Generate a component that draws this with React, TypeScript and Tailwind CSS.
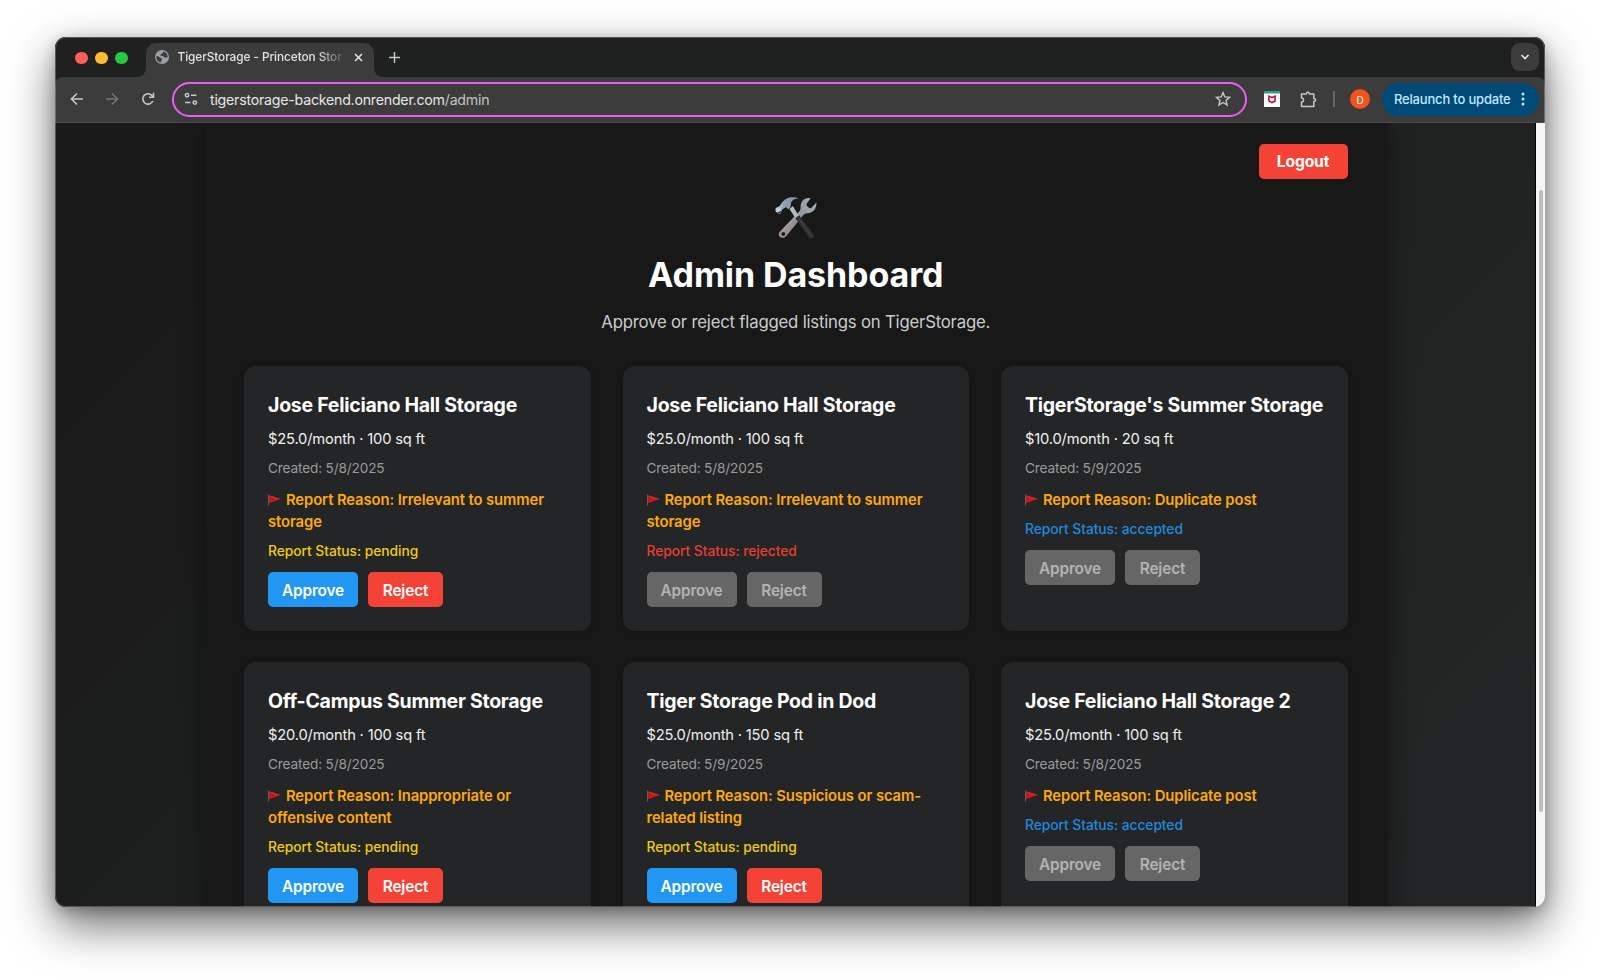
import type { ReactNode } from "react";

type Status = "pending" | "rejected" | "accepted";

interface Listing {
  title: string;
  price: string;
  created: string;
  reason: string[];
  status: Status;
}

const listings: Listing[] = [
  { title: "Jose Feliciano Hall Storage", price: "$25.0/month · 100 sq ft", created: "5/8/2025", reason: ["Irrelevant to summer", "storage"], status: "pending" },
  { title: "Jose Feliciano Hall Storage", price: "$25.0/month · 100 sq ft", created: "5/8/2025", reason: ["Irrelevant to summer", "storage"], status: "rejected" },
  { title: "TigerStorage's Summer Storage", price: "$10.0/month · 20 sq ft", created: "5/9/2025", reason: ["Duplicate post"], status: "accepted" },
  { title: "Off-Campus Summer Storage", price: "$20.0/month · 100 sq ft", created: "5/8/2025", reason: ["Inappropriate or", "offensive content"], status: "pending" },
  { title: "Tiger Storage Pod in Dod", price: "$25.0/month · 150 sq ft", created: "5/9/2025", reason: ["Suspicious or scam-", "related listing"], status: "pending" },
  { title: "Jose Feliciano Hall Storage 2", price: "$25.0/month · 100 sq ft", created: "5/8/2025", reason: ["Duplicate post"], status: "accepted" },
];

const statusColor: Record<Status, string> = {
  pending: "text-[#f0cb0c]",
  rejected: "text-[#e83e32]",
  accepted: "text-[#2089de]",
};

function Flag() {
  return (
    <svg className="mr-[5px] inline-block h-3 w-[13px] align-[-1px]" viewBox="0 0 13 12">
      <path d="M1 1.2 13 5 1 9.300Z" fill="#c8161a" />
      <path d="M1 1.2 13 5 6 4.600Z" fill="#e0473f" opacity=".6" />
      <path d="M.5.5V11.500" stroke="#6b6f72" strokeWidth=".8" />
    </svg>
  );
}

function Tools() {
  return (
    <svg className="h-[42px] w-[42px]" viewBox="0 0 42 42">
      <defs>
        <linearGradient id="steel" x1="1" y1="0" x2="0" y2="1">
          <stop offset="0" stopColor="#a9b3bf" />
          <stop offset=".5" stopColor="#8f8f98" />
          <stop offset="1" stopColor="#a48f92" />
        </linearGradient>
        <linearGradient id="head" x1="0" y1="0" x2="1" y2="0">
          <stop offset="0" stopColor="#c4d6e6" />
          <stop offset=".35" stopColor="#8f9fb0" />
          <stop offset="1" stopColor="#7f90a2" />
        </linearGradient>
      </defs>
      <path
        d="M35.6 1.2c-5.200-1.200-10.200 2.800-10 8.300.1 2-.2 3.500-1.200 4.700L4.700 34.700c-2.700 3.400.8 7.600 4.800 5.700 1-.5 1.500-1 2.200-1.900L28.400 18c1-1.100 2.400-1.600 4.100-1.700 5.300-.2 9.400-4.800 8.900-10.800l-5.400 5.700c-2.200.4-4.200-1.400-4.500-4.100Z"
        fill="url(#steel)"
      />
      <path d="M7 34.500 26 14.500" stroke="#c9c4c8" strokeWidth=".8" opacity=".6" />
      <circle cx="8.300" cy="37" r="1.900" fill="#1b1b1b" />
      <path d="m14.500 12 3.300-3 6.300 10.500-3.100 2.500Z" fill="#b3bcc5" />
      <path d="m20.300 21 3.900-2.700 13.900 18.200c2.400 3.500-.900 6.600-4 4.200Z" fill="#303134" />
      <path d="m23.500 21.500 12 16.500" stroke="#4a4b4e" strokeWidth=".9" />
      <path
        d="M1.300 11.300 5 8.800c1.900-3.500 5-7.300 9.500-8.200 3-.6 6.500-.5 9.200.9-4 .1-6.700 1.500-7.700 4.200-.1 2.600-.3 5-2.200 6.600l-3-2-3.600 2.200-2 4.200c-3 .4-4.900-2.300-3.900-5.400Z"
        fill="url(#head)"
      />
      <circle cx="3" cy="12.800" r="2.600" fill="#b9d0e2" />
      <path d="M2.300 16.300 5.900 14.700" stroke="#35383c" strokeWidth="1.300" />
    </svg>
  );
}

function Button({ color, children }: { color: string; children: ReactNode }) {
  return (
    <button className={`h-[35px] rounded-[5px] pt-[2px] text-[15.4px] font-semibold tracking-[-0.17px] ${color}`}>
      {children}
    </button>
  );
}

function Card({ item }: { item: Listing }) {
  const open = item.status === "pending";
  return (
    <article className="h-[264.500px] rounded-xl bg-[#242527] p-6 shadow-[0_2px_8px_rgba(0,0,0,0.15)]">
      <h2 className="mb-[7px] h-[31px] text-[19.500px] leading-[31px] font-[650] tracking-[-0.26px] whitespace-nowrap text-white">{item.title}</h2>
      <p className="mb-[7px] text-[14.700px] leading-[22px] tracking-[-0.17px] text-[#f0f0f0]">{item.price}</p>
      <p className="mb-[10px] text-[13.700px] leading-[22px] tracking-[-0.18px] text-[#9a9a9a]">Created: {item.created}</p>
      <p className="mb-[6.500px] text-[14.800px] leading-[22px] font-semibold tracking-[-0.09px] whitespace-nowrap text-[#ffa90a]">
        <Flag />
        Report Reason: {item.reason[0]}
        {item.reason[1] && <br />}
        {item.reason[1]}
      </p>
      <p className={`mb-[10.500px] text-[13.800px] leading-[22px] font-medium tracking-[-0.05px] ${statusColor[item.status]}`}>
        Report Status: {item.status}
      </p>
      <div className="flex gap-2.5 [&>button:first-child]:w-[90px] [&>button:last-child]:w-[75px]">
        <Button color={open ? "bg-[#2196f3] text-white" : "bg-[#666666] text-[#b3b3b3]"}>Approve</Button>
        <Button color={open ? "bg-[#f44336] text-white" : "bg-[#666666] text-[#b3b3b3]"}>Reject</Button>
      </div>
    </article>
  );
}

function TabStrip() {
  return (
    <div className="flex h-[39.500px] shrink-0 items-end bg-[#1f2120] pr-1.5">
      <div className="mb-[12.500px] ml-5 flex gap-[7.500px]">
        <span className="size-[12.500px] rounded-full bg-[#ff5f57]" />
        <span className="size-[12.500px] rounded-full bg-[#febc2e]" />
        <span className="size-[12.500px] rounded-full bg-[#28c840]" />
      </div>
      <svg className="ml-[8.500px] size-[10px]" viewBox="0 0 10 10"><path d="M10 0v10H0Q10 10 10 0Z" fill="#3c3c3c" /></svg>
      <div className="flex h-[33.500px] w-[228px] items-center rounded-t-[10px] bg-[#3c3c3c] pb-[5px] pl-[8.500px]">
        <svg className="size-[14px]" viewBox="0 0 14 14">
          <circle cx="7" cy="7" r="7" fill="#9aa0a6" />
          <path d="M1.300 6.200c1.500 0 3 .3 3.700 1.300.4.800 1.900.7 2 1.700.1 1-.9 1-.9 2.100v1.100C3.300 12.200 1 9.700 1.300 6.200ZM8.200 1.500c0 1.600-.6 2.100-1.800 2.200-.8.100-.5 1.200-1.300 1.500.7.900 2.500.4 3.300 1.300.7.800 1.500 1.300 2.700 1.100.800-.1 1.500-.3 1.600-.9C12.600 4.200 10.900 1.900 8.200 1.500Z" fill="#3c3c3c" />
        </svg>
        <span className="ml-[9px] w-[165px] text-[11.800px] leading-4 font-medium tracking-[-0.06px] whitespace-nowrap text-[#e3e3e3] [mask-image:linear-gradient(to_right,black_84%,transparent_103%)]">
          TigerStorage - Princeton Stor
        </span>
        <svg className="ml-[11.500px] size-[9px]" viewBox="0 0 9 9"><path d="m1 1 7 7m0-7-7 7" stroke="#e3e3e3" strokeWidth="1.500" /></svg>
      </div>
      <svg className="size-[10px]" viewBox="0 0 10 10"><path d="M0 0v10h10Q0 10 0 0Z" fill="#3c3c3c" /></svg>
      <svg className="mb-[14px] ml-[4.500px] size-[11px]" viewBox="0 0 11 11"><path d="M5.500 0v11M0 5.500h11" stroke="#c7c7c7" strokeWidth="1.500" /></svg>
      <div className="mb-[5.500px] ml-auto flex size-7 items-center justify-center rounded-[9px] bg-[#3c3c3c]">
        <svg className="size-[10px]" viewBox="0 0 10 10" fill="none"><path d="m1.500 3 3.500 3.500L8.500 3" stroke="#e3e3e3" strokeWidth="1.700" /></svg>
      </div>
    </div>
  );
}

function Toolbar() {
  return (
    <div className="bg-[#1f2120]">
      <div className="flex h-[46.500px] shrink-0 items-center rounded-t-[8px] border-b border-[#4a4a4a] bg-[#3c3c3c] pr-[6px] pl-[15px]">
        <svg className="size-[14px]" viewBox="0 0 14 14" fill="none" stroke="#c7c7c7" strokeWidth="1.600"><path d="M13 7H2M7 1.500 1.500 7 7 12.500" /></svg>
        <svg className="ml-[21px] size-[14px]" viewBox="0 0 14 14" fill="none" stroke="#757575" strokeWidth="1.600"><path d="M1 7h11M7 1.500 12.500 7 7 12.500" /></svg>
        <svg className="ml-[22px] size-[14px]" viewBox="0 0 14 14" fill="none" stroke="#c7c7c7" strokeWidth="1.600"><path d="M11.800 9A5.200 5.200 0 1 1 11 3.600l1.200 1.300" /><path d="M12.500.8v4.500H8" /></svg>
        <div className="ml-[17px] flex h-[35px] w-[1075px] items-center rounded-full border-2 border-[#ee5cf6] pr-[14px] pl-[9.500px]">
          <svg className="size-[14px]" viewBox="0 0 14 14" fill="none" stroke="#c7c7c7" strokeWidth="1.500"><circle cx="3" cy="3.300" r="1.700" /><path d="M7 3.300h5.500M1 10.600h5.500" /><circle cx="10.800" cy="10.600" r="1.700" /></svg>
          <span className="ml-[12.500px] pt-px text-[14.200px] leading-5 tracking-[-0.24px] text-[#e6e6e6]">
            tigerstorage-backend.onrender.com<span className="text-[#c3c3c3]">/admin</span>
          </span>
          <svg className="ml-auto size-4" viewBox="0 0 16 16" fill="none" stroke="#c7c7c7" strokeWidth="1.400"><path d="m8 1.600 1.800 4.300 4.700.4L11 9.400l1.100 4.600L8 11.500 3.900 14 5 9.400 1.500 6.300l4.700-.4Z" /></svg>
        </div>
        <svg className="ml-[17px] h-4 w-4" viewBox="0 0 16 16">
          <path d="M0 0h16v16H0Z" fill="#fff" />
          <path d="M0 0h16v2.500H0Z" fill="#2f9c86" />
          <path d="M4.900 5.200 8 6.500l3.100-1.300v4.900L8 11.500l-3.100-1.400Z" fill="none" stroke="#c8102e" strokeWidth="1.600" />
        </svg>
        <svg className="ml-[19.500px] h-[17px] w-[18px]" viewBox="0 0 18 17" fill="none" stroke="#c7c7c7" strokeWidth="1.500" strokeLinejoin="round">
          <path d="M1.500 3h4.900c0-1.300.6-1.900 1.400-1.900s1.400.6 1.400 1.900h4.600v4.700c1.300 0 1.900.6 1.900 1.400s-.6 1.400-1.900 1.400v5H1.500v-4.400c1.300-.1 2-.9 2-2s-.7-1.900-2-2Z" />
        </svg>
        <span className="ml-[15.500px] h-4 w-[1.500px] bg-[#666]" />
        <span className="ml-[15.500px] flex size-5 items-center justify-center rounded-full bg-[#f4511e] pt-px text-[10px] leading-none text-white">D</span>
        <div className="ml-auto flex h-[33px] w-[157px] items-center rounded-full bg-[#004a77] pl-[12px] text-[13px] font-medium tracking-[-0.18px] whitespace-nowrap text-[#c2e7ff]">
          <span className="pt-px">Relaunch to update</span>
          <svg className="ml-[10px] h-[14px] w-[4px]" viewBox="0 0 4 14" fill="#c2e7ff"><circle cx="2" cy="2" r="1.500" /><circle cx="2" cy="7" r="1.500" /><circle cx="2" cy="12" r="1.500" /></svg>
        </div>
      </div>
    </div>
  );
}

export default function App() {
  return (
    <div className="h-[980px] w-[1600px] overflow-hidden bg-white pt-[37px] pl-[55px] font-['Inter',sans-serif]">
      <div className="h-[870px] w-[1490px] rounded-[11px] shadow-[0_18px_46px_rgba(0,0,0,0.58),0_4px_14px_rgba(0,0,0,0.22)]">
        <div className="relative flex h-full flex-col overflow-hidden rounded-[11px] bg-[#1f2120]">
          <TabStrip />
          <Toolbar />
          <div className="flex min-h-0 flex-1">
            <main className="flex h-full min-w-0 flex-1 overflow-hidden border-r border-black bg-[linear-gradient(135deg,#1a1a1a_0%,#1b1b1b_22%,#1d1f1f_38%,#212323_68%,#232526_100%)] pl-[150px]">
              <section className="h-[900px] w-[1183px] shrink-0 bg-[#181818] pt-[20.500px] pr-[40.500px] pl-[39px] shadow-[0_0_24px_rgba(0,0,0,0.4)]">
                <div className="flex justify-end">
                  <button className="h-[35px] w-[89px] rounded-[5px] bg-[#f44336] pt-[2px] text-[15.700px] font-bold tracking-[-0.18px] text-white">Logout</button>
                </div>
                <header className="flex flex-col items-center pt-[18.500px]">
                  <Tools />
                  <h1 className="mt-[14px] text-[34px] leading-[44px] font-bold tracking-[-0.1px] text-white">Admin Dashboard</h1>
                  <p className="mt-[13px] text-[16.750px] leading-[24px] tracking-[-0.21px] text-[#cccccc]">Approve or reject flagged listings on TigerStorage.</p>
                </header>
                <div className="mt-[32px] grid grid-cols-3 gap-x-8 gap-y-[31.500px]">
                  {listings.map((item, i) => (
                    <Card key={i} item={item} />
                  ))}
                </div>
              </section>
            </main>
            <div className="w-[9px] shrink-0 bg-[#f5f5f5] pt-[67px] pl-[2.500px]">
              <div className="h-[622px] w-[4px] rounded-full bg-[#bdbdbd]" />
            </div>
          </div>
          <div className="pointer-events-none absolute inset-0 rounded-[11px] border border-white/25" />
        </div>
      </div>
    </div>
  );
}
